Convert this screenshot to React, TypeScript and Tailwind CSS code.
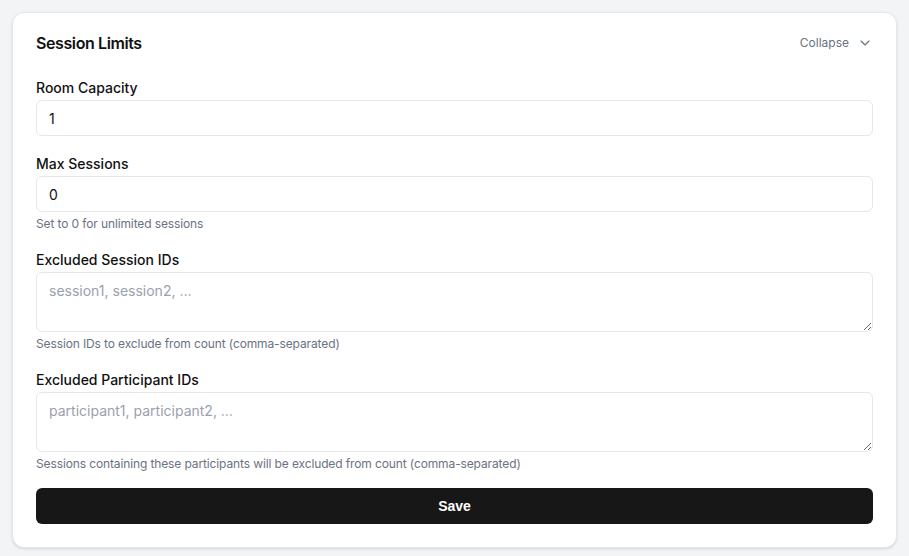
import { ChevronDown } from "lucide-react";

function Field({ label, children, hint }: { label: string; children: React.ReactNode; hint?: string }) {
  return (
    <div className="flex flex-col">
      <label className="text-sm font-medium leading-5 text-[#111]">{label}</label>
      <div className="mt-[2px]">{children}</div>
      {hint && <p className="mt-1 text-xs leading-4 tracking-[-0.01em] text-gray-500">{hint}</p>}
    </div>
  );
}

export default function App() {
  return (
    <div
      className="min-h-screen bg-[#f3f4f6] p-3"
      style={{ fontFamily: "Inter, 'Noto Sans', sans-serif" }}
    >
      <div className="rounded-xl border border-[#e5e7eb] bg-white px-[23px] pt-[18px] pb-[23px] shadow-sm">
        <div className="flex items-center justify-between">
          <h2 className="text-base font-semibold leading-6 tracking-tight text-[#111]">Session Limits</h2>
          <button className="flex items-center gap-2 text-xs text-gray-500">
            Collapse
            <ChevronDown className="h-4 w-4" strokeWidth={1.75} />
          </button>
        </div>

        <form className="mt-[23px] flex flex-col gap-[18px]" onSubmit={(e) => e.preventDefault()}>
          <Field label="Room Capacity">
            <input
              defaultValue="1"
              className="h-9 w-full rounded-md border border-[#e5e7eb] px-3 text-sm text-[#111] outline-none"
            />
          </Field>

          <Field label="Max Sessions" hint="Set to 0 for unlimited sessions">
            <input
              defaultValue="0"
              className="h-9 w-full rounded-md border border-[#e5e7eb] px-3 text-sm text-[#111] outline-none"
            />
          </Field>

          <Field label="Excluded Session IDs" hint="Session IDs to exclude from count (comma-separated)">
            <textarea
              placeholder="session1, session2, …"
              className="block h-[60px] w-full rounded-md border border-[#e5e7eb] px-3 py-2 text-sm text-[#111] outline-none placeholder:text-gray-400"
            />
          </Field>

          <Field
            label="Excluded Participant IDs"
            hint="Sessions containing these participants will be excluded from count (comma-separated)"
          >
            <textarea
              placeholder="participant1, participant2, …"
              className="block h-[60px] w-full rounded-md border border-[#e5e7eb] px-3 py-2 text-sm text-[#111] outline-none placeholder:text-gray-400"
            />
          </Field>

          <button
            type="submit"
            className="-mt-[2px] h-9 w-full rounded-md bg-[#171717] text-sm font-bold text-white"
            style={{ fontFamily: "'Liberation Sans', Arial, sans-serif" }}
          >
            Save
          </button>
        </form>
      </div>
    </div>
  );
}
